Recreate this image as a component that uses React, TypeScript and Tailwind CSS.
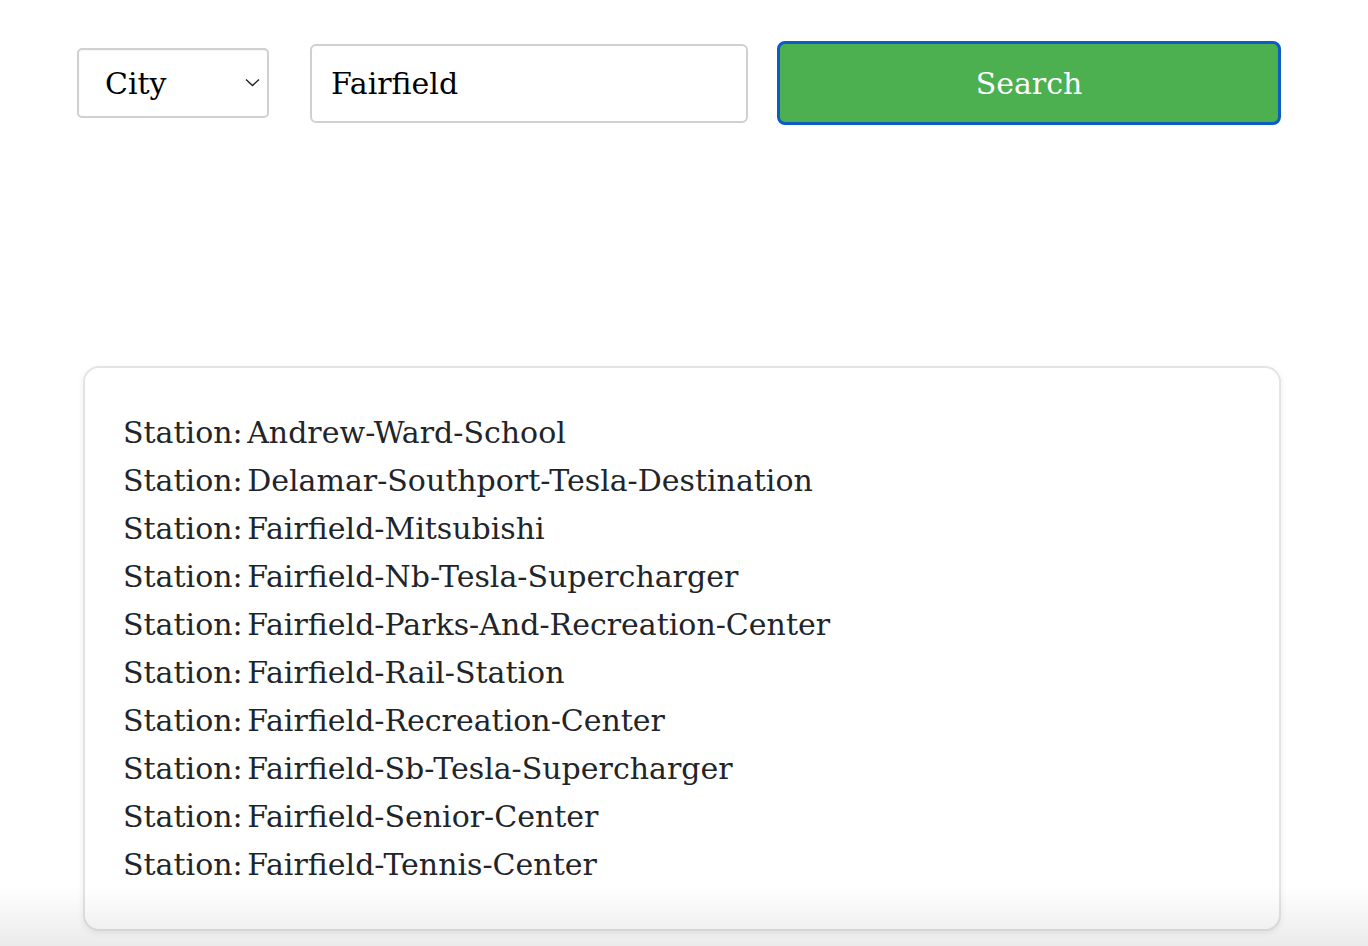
import React from 'react';

const stations = [
    'Andrew-Ward-School',
    'Delamar-Southport-Tesla-Destination',
    'Fairfield-Mitsubishi',
    'Fairfield-Nb-Tesla-Supercharger',
    'Fairfield-Parks-And-Recreation-Center',
    'Fairfield-Rail-Station',
    'Fairfield-Recreation-Center',
    'Fairfield-Sb-Tesla-Supercharger',
    'Fairfield-Senior-Center',
    'Fairfield-Tennis-Center',
];

const App = () => {
    return (
        <div className="min-h-[946px] bg-white font-['DejaVu_Serif',serif] text-[#212529]">
            {/* search bar */}
            <div className="flex items-center pl-[77px] pt-[41px]">
                <div className="relative w-[192px] h-[70px]">
                    <select
                        defaultValue="city"
                        className="appearance-none w-full h-full rounded-[5px] border-2 border-[#d0d0d0] bg-white pl-[26px] text-[30px] text-black shadow-[inset_0_1px_2px_rgba(0,0,0,0.04)] outline-none"
                    >
                        <option value="city">City</option>
                        <option value="station">Station</option>
                    </select>
                    <svg
                        className="absolute right-[9px] top-[30px] pointer-events-none"
                        width="15"
                        height="9"
                        viewBox="0 0 15 9"
                        fill="none"
                    >
                        <path d="M1 1.5l6.5 6 6.5-6" stroke="#222" strokeWidth="1.4" />
                    </svg>
                </div>
                <input
                    defaultValue="Fairfield"
                    className="ml-[41px] w-[438px] h-[79px] rounded-[6px] border-2 border-[#d0d0d0] bg-white px-[19px] text-[30px] text-black outline-none"
                />
                <button className="ml-[29px] w-[504px] h-[84px] rounded-[8px] border-[3.5px] border-[#0b5cc4] bg-[#4caf50] text-[30px] text-white">
                    Search
                </button>
            </div>

            {/* results */}
            <div className="mt-[241px] ml-[83px] w-[1198px] rounded-[16px] border-2 border-[#e4e4e4] bg-white pl-[38px] pt-[41px] pb-[40px] shadow-[0_2px_6px_rgba(0,0,0,0.08)]">
                <ul className="text-[30px] leading-[48px] [word-spacing:-5px]">
                    {stations.map((s) => (
                        <li key={s}>Station: {s}</li>
                    ))}
                </ul>
            </div>

            {/* bottom fade */}
            <div className="fixed left-0 right-0 bottom-0 h-[60px] pointer-events-none bg-gradient-to-b from-[rgba(0,0,0,0)] to-[rgba(0,0,0,0.08)]" />
        </div>
    );
};

export default App;
